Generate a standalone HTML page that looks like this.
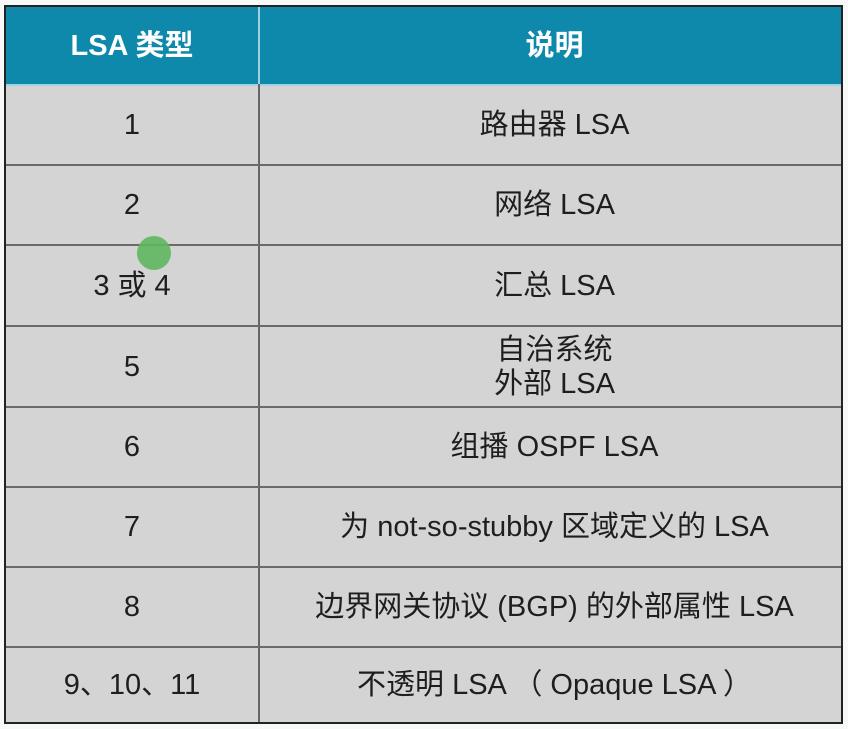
<!DOCTYPE html>
<html><head><meta charset="utf-8"><style>
body{margin:0;width:848px;height:729px;background:#f7f9f9;position:relative;overflow:hidden;font-family:"Liberation Sans","Noto Sans CJK SC",sans-serif;}
.t{position:absolute;left:4px;top:5px;width:835px;height:715px;border:2px solid #222;background:#d4d4d4;}
.h{position:absolute;left:0;top:0;width:835px;height:77px;background:#0f89ab;border-bottom:2px solid #9cd4e4;}
.v{position:absolute;left:252px;top:0;width:2px;height:715px;background:#666;}
.vh{position:absolute;left:252px;top:0;width:2px;height:77px;background:#9cd4e4;}
.r{position:absolute;left:0;width:835px;height:2px;background:#6a6a6a;}
.c{position:absolute;display:flex;align-items:center;justify-content:center;text-align:center;font-size:29px;color:#1e1e1e;line-height:34px;white-space:nowrap;}
.a{left:0;width:252px}.b{left:258px;width:581px}
.hd{color:#fff;font-weight:bold;font-size:29px}
.dot{position:absolute;left:137px;top:236px;width:34px;height:34px;border-radius:50%;background:#5fb760;opacity:.9}
</style></head><body>
<div class="t">
<div class="h"></div><div class="v"></div><div class="vh"></div>
<div class="c a hd" style="top:0;height:77px">LSA 类型</div>
<div class="c b hd" style="top:0;height:77px">说明</div>
<div class="r" style="top:157px"></div>
<div class="r" style="top:237px"></div>
<div class="r" style="top:318px"></div>
<div class="r" style="top:399px"></div>
<div class="r" style="top:479px"></div>
<div class="r" style="top:559px"></div>
<div class="r" style="top:639px"></div>
<div class="c a" style="top:79px;height:78px">1</div><div class="c b" style="top:79px;height:78px">路由器 LSA</div>
<div class="c a" style="top:159px;height:78px">2</div><div class="c b" style="top:159px;height:78px">网络 LSA</div>
<div class="c a" style="top:239px;height:79px">3 或 4</div><div class="c b" style="top:239px;height:79px">汇总 LSA</div>
<div class="c a" style="top:320px;height:79px">5</div><div class="c b" style="top:320px;height:79px">自治系统<br>外部 LSA</div>
<div class="c a" style="top:401px;height:78px">6</div><div class="c b" style="top:401px;height:78px">组播 OSPF LSA</div>
<div class="c a" style="top:481px;height:78px">7</div><div class="c b" style="top:481px;height:78px">为 not-so-stubby 区域定义的 LSA</div>
<div class="c a" style="top:561px;height:78px">8</div><div class="c b" style="top:561px;height:78px">边界网关协议 (BGP) 的外部属性 LSA</div>
<div class="c a" style="top:641px;height:74px">9、10、11</div><div class="c b" style="top:641px;height:74px">不透明 LSA （ Opaque LSA ）</div>
</div>
<div class="dot"></div>
</body></html>
